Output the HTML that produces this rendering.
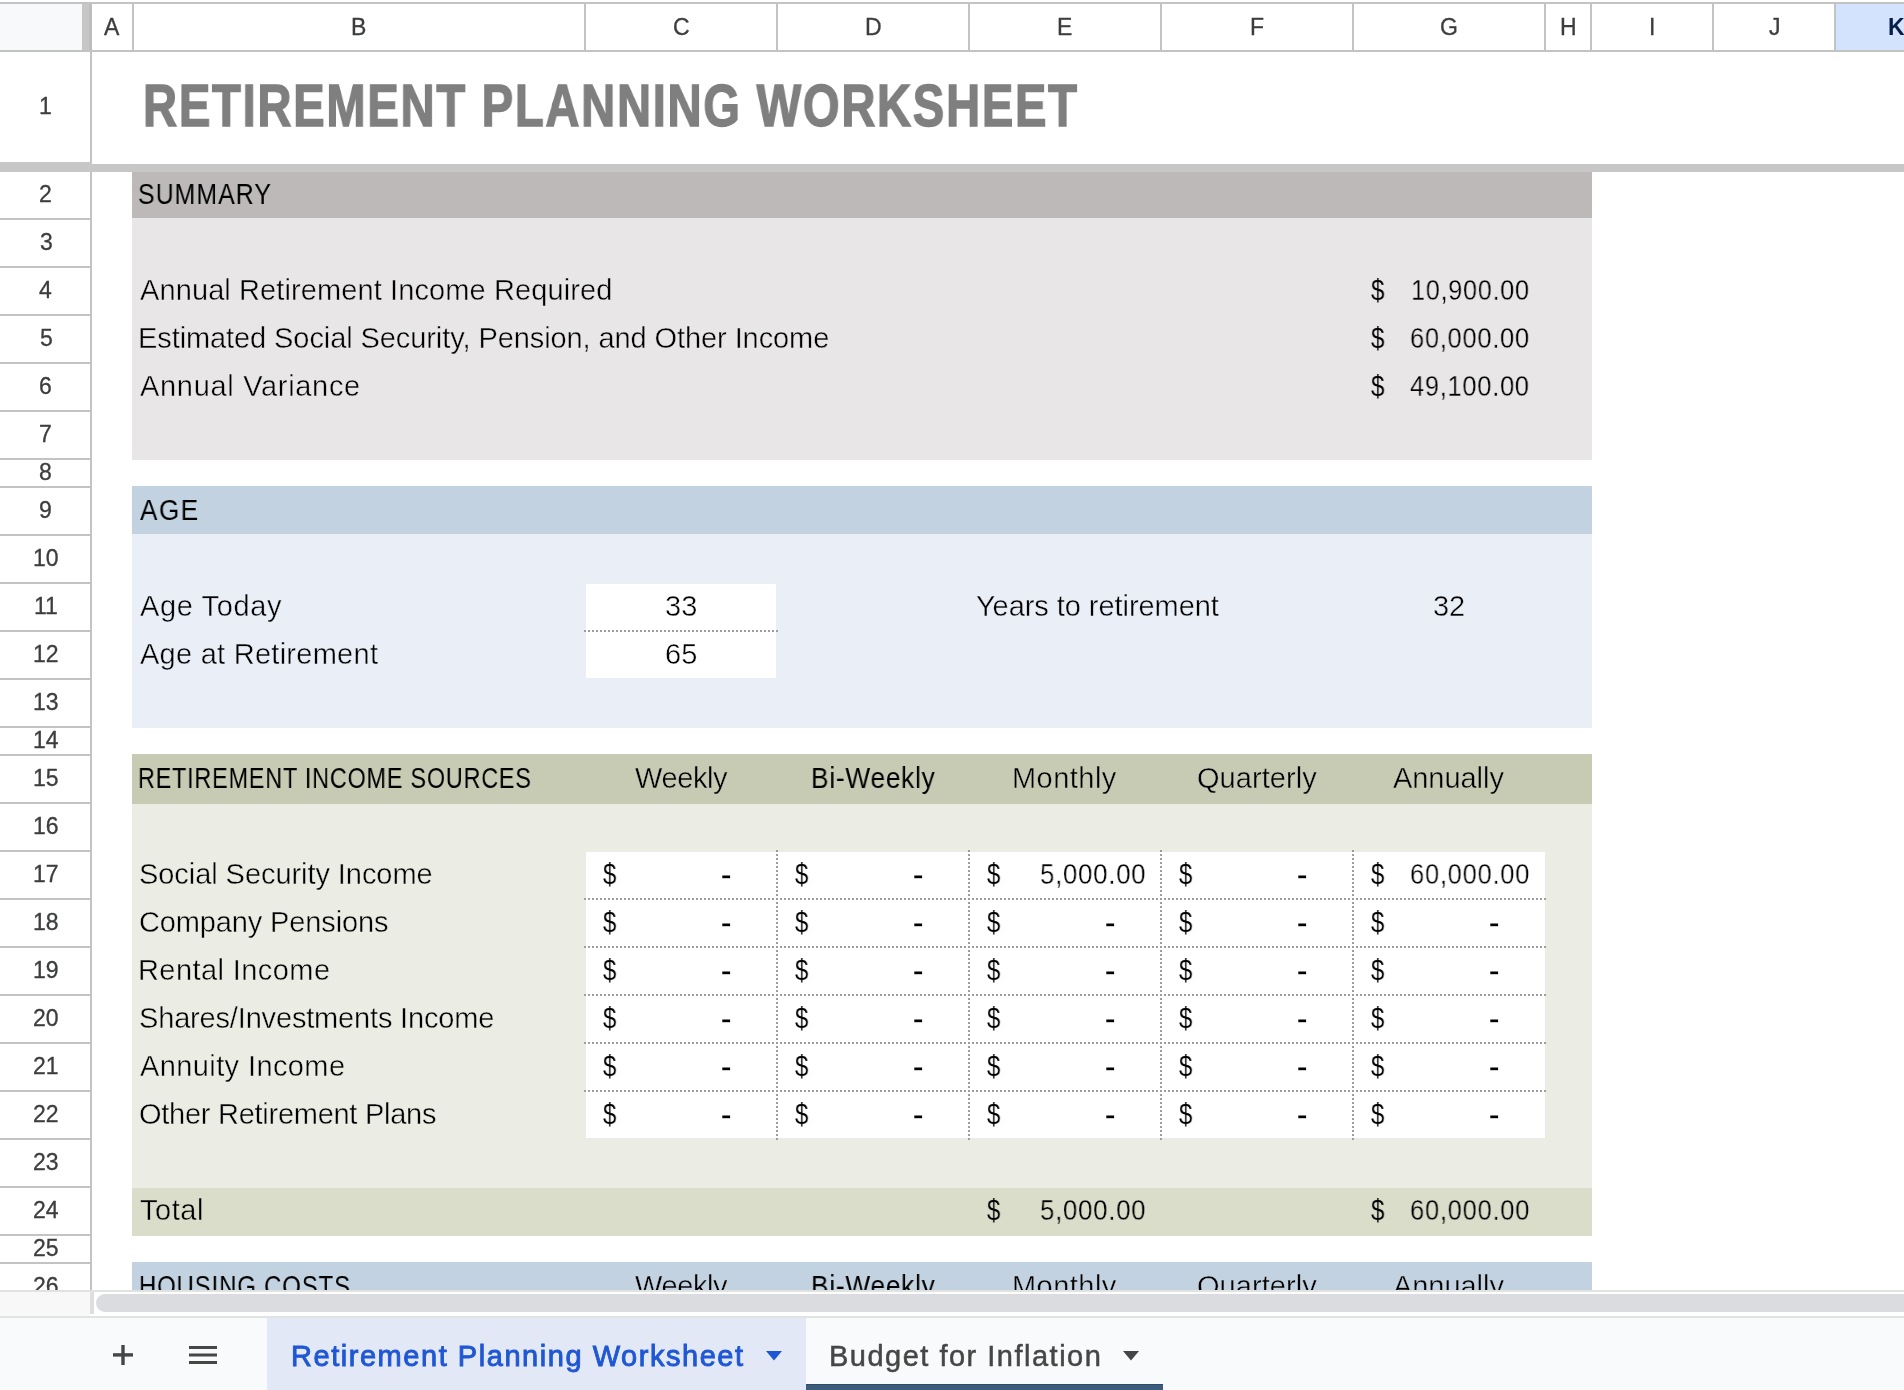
<!DOCTYPE html>
<html><head><meta charset="utf-8"><title>Retirement Planning Worksheet</title>
<style>
html,body{margin:0;padding:0;width:1904px;height:1390px;overflow:hidden;background:#fff}
body>div,body>svg{position:absolute}
.t{font-family:"Liberation Sans",sans-serif;line-height:1;white-space:nowrap;will-change:transform;-webkit-font-smoothing:antialiased}
</style></head><body>
<div style="left:0px;top:0px;width:1904px;height:1390px;background:#ffffff;"></div>
<div style="left:0px;top:2px;width:1904px;height:2px;background:#c2c4c3;"></div>
<div style="left:0px;top:4px;width:82px;height:46px;background:#f8f9fa;"></div>
<div style="left:82px;top:4px;width:10px;height:46px;background:#c7c7c7;"></div>
<div style="left:89px;top:4px;width:3px;height:46px;background:#bdbdbd;"></div>
<div style="left:0px;top:50px;width:1904px;height:2px;background:#c2c4c3;"></div>
<div style="left:132px;top:4px;width:2px;height:46px;background:#c2c4c3;"></div>
<div style="left:584px;top:4px;width:2px;height:46px;background:#c2c4c3;"></div>
<div style="left:776px;top:4px;width:2px;height:46px;background:#c2c4c3;"></div>
<div style="left:968px;top:4px;width:2px;height:46px;background:#c2c4c3;"></div>
<div style="left:1160px;top:4px;width:2px;height:46px;background:#c2c4c3;"></div>
<div style="left:1352px;top:4px;width:2px;height:46px;background:#c2c4c3;"></div>
<div style="left:1544px;top:4px;width:2px;height:46px;background:#c2c4c3;"></div>
<div style="left:1590px;top:4px;width:2px;height:46px;background:#c2c4c3;"></div>
<div style="left:1712px;top:4px;width:2px;height:46px;background:#c2c4c3;"></div>
<div style="left:1834px;top:4px;width:2px;height:46px;background:#c2c4c3;"></div>
<div style="left:1836px;top:4px;width:68px;height:46px;background:#d3e3fd;"></div>
<div style="left:132px;top:172px;width:1460px;height:46px;background:#bdb9b9;"></div>
<div style="left:132px;top:218px;width:1460px;height:242px;background:#e8e6e7;"></div>
<div style="left:132px;top:486px;width:1460px;height:48px;background:#c3d2e1;"></div>
<div style="left:132px;top:534px;width:1460px;height:194px;background:#eaeef6;"></div>
<div style="left:132px;top:754px;width:1460px;height:50px;background:#c8cbb4;"></div>
<div style="left:132px;top:804px;width:1460px;height:384px;background:#ebece4;"></div>
<div style="left:132px;top:1188px;width:1460px;height:48px;background:#dbddcb;"></div>
<div style="left:132px;top:1262px;width:1460px;height:28px;background:#c3d2e1;"></div>
<div style="left:586px;top:584px;width:190px;height:94px;background:#ffffff;"></div>
<div style="left:586px;top:852px;width:959px;height:286px;background:#ffffff;"></div>
<div style="left:584px;top:630px;width:194px;height:2px;background:repeating-linear-gradient(90deg,#9e9e9e 0 2px,transparent 2px 4px);background-position:0px 0"></div>
<div style="left:584px;top:898px;width:962px;height:2px;background:repeating-linear-gradient(90deg,#9e9e9e 0 2px,transparent 2px 4px);background-position:0px 0"></div>
<div style="left:584px;top:946px;width:962px;height:2px;background:repeating-linear-gradient(90deg,#9e9e9e 0 2px,transparent 2px 4px);background-position:0px 0"></div>
<div style="left:584px;top:994px;width:962px;height:2px;background:repeating-linear-gradient(90deg,#9e9e9e 0 2px,transparent 2px 4px);background-position:0px 0"></div>
<div style="left:584px;top:1042px;width:962px;height:2px;background:repeating-linear-gradient(90deg,#9e9e9e 0 2px,transparent 2px 4px);background-position:0px 0"></div>
<div style="left:584px;top:1090px;width:962px;height:2px;background:repeating-linear-gradient(90deg,#9e9e9e 0 2px,transparent 2px 4px);background-position:0px 0"></div>
<div style="left:776px;top:850px;width:2px;height:290px;background:repeating-linear-gradient(180deg,#9e9e9e 0 2px,transparent 2px 4px);background-position:0 0px"></div>
<div style="left:968px;top:850px;width:2px;height:290px;background:repeating-linear-gradient(180deg,#9e9e9e 0 2px,transparent 2px 4px);background-position:0 0px"></div>
<div style="left:1160px;top:850px;width:2px;height:290px;background:repeating-linear-gradient(180deg,#9e9e9e 0 2px,transparent 2px 4px);background-position:0 0px"></div>
<div style="left:1352px;top:850px;width:2px;height:290px;background:repeating-linear-gradient(180deg,#9e9e9e 0 2px,transparent 2px 4px);background-position:0 0px"></div>
<div style="left:90px;top:52px;width:2px;height:1238px;background:#c2c4c3;"></div>
<div style="left:0px;top:218px;width:90px;height:2px;background:#c2c4c3;"></div>
<div style="left:0px;top:266px;width:90px;height:2px;background:#c2c4c3;"></div>
<div style="left:0px;top:314px;width:90px;height:2px;background:#c2c4c3;"></div>
<div style="left:0px;top:362px;width:90px;height:2px;background:#c2c4c3;"></div>
<div style="left:0px;top:410px;width:90px;height:2px;background:#c2c4c3;"></div>
<div style="left:0px;top:458px;width:90px;height:2px;background:#c2c4c3;"></div>
<div style="left:0px;top:486px;width:90px;height:2px;background:#c2c4c3;"></div>
<div style="left:0px;top:534px;width:90px;height:2px;background:#c2c4c3;"></div>
<div style="left:0px;top:582px;width:90px;height:2px;background:#c2c4c3;"></div>
<div style="left:0px;top:630px;width:90px;height:2px;background:#c2c4c3;"></div>
<div style="left:0px;top:678px;width:90px;height:2px;background:#c2c4c3;"></div>
<div style="left:0px;top:726px;width:90px;height:2px;background:#c2c4c3;"></div>
<div style="left:0px;top:754px;width:90px;height:2px;background:#c2c4c3;"></div>
<div style="left:0px;top:802px;width:90px;height:2px;background:#c2c4c3;"></div>
<div style="left:0px;top:850px;width:90px;height:2px;background:#c2c4c3;"></div>
<div style="left:0px;top:898px;width:90px;height:2px;background:#c2c4c3;"></div>
<div style="left:0px;top:946px;width:90px;height:2px;background:#c2c4c3;"></div>
<div style="left:0px;top:994px;width:90px;height:2px;background:#c2c4c3;"></div>
<div style="left:0px;top:1042px;width:90px;height:2px;background:#c2c4c3;"></div>
<div style="left:0px;top:1090px;width:90px;height:2px;background:#c2c4c3;"></div>
<div style="left:0px;top:1138px;width:90px;height:2px;background:#c2c4c3;"></div>
<div style="left:0px;top:1186px;width:90px;height:2px;background:#c2c4c3;"></div>
<div style="left:0px;top:1234px;width:90px;height:2px;background:#c2c4c3;"></div>
<div style="left:0px;top:1262px;width:90px;height:2px;background:#c2c4c3;"></div>
<div style="left:0px;top:162px;width:92px;height:10px;background:#c7c7c7;"></div>
<div style="left:92px;top:164px;width:1812px;height:8px;background:#c7c7c7;"></div>
<div style="left:0px;top:1290px;width:1904px;height:2px;background:#e1e3e1;"></div>
<div style="left:0px;top:1292px;width:90px;height:24px;background:#f8f8f8;"></div>
<div style="left:90px;top:1292px;width:4px;height:22px;background:#dedede;"></div>
<div style="left:94px;top:1292px;width:1810px;height:24px;background:#ffffff;"></div>
<div style="left:96px;top:1294px;width:1830px;height:18px;border-radius:9px;background:#dadce0"></div>
<div style="left:0px;top:1316px;width:1904px;height:2px;background:#e1e3e1;"></div>
<div style="left:0px;top:1318px;width:1904px;height:72px;background:#f9fafc;"></div>
<div style="left:267px;top:1318px;width:539px;height:72px;background:#e3e8f6;"></div>
<div style="left:806px;top:1384px;width:357px;height:6px;background:#3d5c7c;"></div>
<div style="left:806px;top:1384px;width:357px;height:1px;background:#2d4d6e;"></div>
<svg style="left:0;top:0;position:absolute" width="1904" height="1390"><g fill="#444746"><rect x="113" y="1353.2" width="20" height="3.4"/><rect x="121.3" y="1345" width="3.4" height="20"/><rect x="189" y="1346" width="28" height="3"/><rect x="189" y="1353.5" width="28" height="3"/><rect x="189" y="1361" width="28" height="3"/><path d="M766 1351 L782 1351 L774 1360.5 Z" fill="#1f57d3"/><path d="M1123 1351 L1139 1351 L1131 1360.5 Z"/></g></svg>
<svg style="left:0;top:0;position:absolute" width="1904" height="1390"><g fill="#000"><rect x="722.3" y="875.5" width="7.8" height="2.7"/><rect x="914.3" y="875.5" width="7.8" height="2.7"/><rect x="1298.3" y="875.5" width="7.8" height="2.7"/><rect x="722.3" y="923.5" width="7.8" height="2.7"/><rect x="914.3" y="923.5" width="7.8" height="2.7"/><rect x="1106.3" y="923.5" width="7.8" height="2.7"/><rect x="1298.3" y="923.5" width="7.8" height="2.7"/><rect x="1490.3" y="923.5" width="7.8" height="2.7"/><rect x="722.3" y="971.5" width="7.8" height="2.7"/><rect x="914.3" y="971.5" width="7.8" height="2.7"/><rect x="1106.3" y="971.5" width="7.8" height="2.7"/><rect x="1298.3" y="971.5" width="7.8" height="2.7"/><rect x="1490.3" y="971.5" width="7.8" height="2.7"/><rect x="722.3" y="1019.5" width="7.8" height="2.7"/><rect x="914.3" y="1019.5" width="7.8" height="2.7"/><rect x="1106.3" y="1019.5" width="7.8" height="2.7"/><rect x="1298.3" y="1019.5" width="7.8" height="2.7"/><rect x="1490.3" y="1019.5" width="7.8" height="2.7"/><rect x="722.3" y="1067.5" width="7.8" height="2.7"/><rect x="914.3" y="1067.5" width="7.8" height="2.7"/><rect x="1106.3" y="1067.5" width="7.8" height="2.7"/><rect x="1298.3" y="1067.5" width="7.8" height="2.7"/><rect x="1490.3" y="1067.5" width="7.8" height="2.7"/><rect x="722.3" y="1115.5" width="7.8" height="2.7"/><rect x="914.3" y="1115.5" width="7.8" height="2.7"/><rect x="1106.3" y="1115.5" width="7.8" height="2.7"/><rect x="1298.3" y="1115.5" width="7.8" height="2.7"/><rect x="1490.3" y="1115.5" width="7.8" height="2.7"/></g></svg>
<div class="t" style="left:104.15px;top:16px;font-size:23px;color:#3b3d3e;-webkit-text-stroke:0.3px #3b3d3e;">A</div>
<div class="t" style="left:351.15px;top:16px;font-size:23px;color:#3b3d3e;-webkit-text-stroke:0.3px #3b3d3e;">B</div>
<div class="t" style="left:672.65px;top:16px;font-size:23px;color:#3b3d3e;-webkit-text-stroke:0.3px #3b3d3e;">C</div>
<div class="t" style="left:864.65px;top:16px;font-size:23px;color:#3b3d3e;-webkit-text-stroke:0.3px #3b3d3e;">D</div>
<div class="t" style="left:1057.15px;top:16px;font-size:23px;color:#3b3d3e;-webkit-text-stroke:0.3px #3b3d3e;">E</div>
<div class="t" style="left:1249.65px;top:16px;font-size:23px;color:#3b3d3e;-webkit-text-stroke:0.3px #3b3d3e;">F</div>
<div class="t" style="left:1440.15px;top:16px;font-size:23px;color:#3b3d3e;-webkit-text-stroke:0.3px #3b3d3e;">G</div>
<div class="t" style="left:1560.15px;top:16px;font-size:23px;color:#3b3d3e;-webkit-text-stroke:0.3px #3b3d3e;">H</div>
<div class="t" style="left:1648.65px;top:16px;font-size:23px;color:#3b3d3e;-webkit-text-stroke:0.3px #3b3d3e;">I</div>
<div class="t" style="left:1769.15px;top:16px;font-size:23px;color:#3b3d3e;-webkit-text-stroke:0.3px #3b3d3e;">J</div>
<div class="t" style="left:1888.00px;top:16px;font-size:23px;color:#041e49;font-weight:bold;">K</div>
<div class="t" style="left:39.45px;top:95px;font-size:23px;color:#3b3d3e;-webkit-text-stroke:0.3px #3b3d3e;">1</div>
<div class="t" style="left:39.45px;top:183px;font-size:23px;color:#3b3d3e;-webkit-text-stroke:0.3px #3b3d3e;">2</div>
<div class="t" style="left:39.95px;top:231px;font-size:23px;color:#3b3d3e;-webkit-text-stroke:0.3px #3b3d3e;">3</div>
<div class="t" style="left:39.45px;top:279px;font-size:23px;color:#3b3d3e;-webkit-text-stroke:0.3px #3b3d3e;">4</div>
<div class="t" style="left:39.95px;top:327px;font-size:23px;color:#3b3d3e;-webkit-text-stroke:0.3px #3b3d3e;">5</div>
<div class="t" style="left:39.45px;top:375px;font-size:23px;color:#3b3d3e;-webkit-text-stroke:0.3px #3b3d3e;">6</div>
<div class="t" style="left:39.45px;top:423px;font-size:23px;color:#3b3d3e;-webkit-text-stroke:0.3px #3b3d3e;">7</div>
<div class="t" style="left:39.45px;top:461px;font-size:23px;color:#3b3d3e;-webkit-text-stroke:0.3px #3b3d3e;">8</div>
<div class="t" style="left:39.45px;top:499px;font-size:23px;color:#3b3d3e;-webkit-text-stroke:0.3px #3b3d3e;">9</div>
<div class="t" style="left:33.05px;top:547px;font-size:23px;color:#3b3d3e;-webkit-text-stroke:0.3px #3b3d3e;">10</div>
<div class="t" style="left:33.91px;top:595px;font-size:23px;color:#3b3d3e;-webkit-text-stroke:0.3px #3b3d3e;">11</div>
<div class="t" style="left:33.05px;top:643px;font-size:23px;color:#3b3d3e;-webkit-text-stroke:0.3px #3b3d3e;">12</div>
<div class="t" style="left:33.05px;top:691px;font-size:23px;color:#3b3d3e;-webkit-text-stroke:0.3px #3b3d3e;">13</div>
<div class="t" style="left:32.55px;top:729px;font-size:23px;color:#3b3d3e;-webkit-text-stroke:0.3px #3b3d3e;">14</div>
<div class="t" style="left:33.05px;top:767px;font-size:23px;color:#3b3d3e;-webkit-text-stroke:0.3px #3b3d3e;">15</div>
<div class="t" style="left:33.05px;top:815px;font-size:23px;color:#3b3d3e;-webkit-text-stroke:0.3px #3b3d3e;">16</div>
<div class="t" style="left:33.05px;top:863px;font-size:23px;color:#3b3d3e;-webkit-text-stroke:0.3px #3b3d3e;">17</div>
<div class="t" style="left:33.05px;top:911px;font-size:23px;color:#3b3d3e;-webkit-text-stroke:0.3px #3b3d3e;">18</div>
<div class="t" style="left:33.05px;top:959px;font-size:23px;color:#3b3d3e;-webkit-text-stroke:0.3px #3b3d3e;">19</div>
<div class="t" style="left:33.05px;top:1007px;font-size:23px;color:#3b3d3e;-webkit-text-stroke:0.3px #3b3d3e;">20</div>
<div class="t" style="left:33.05px;top:1055px;font-size:23px;color:#3b3d3e;-webkit-text-stroke:0.3px #3b3d3e;">21</div>
<div class="t" style="left:33.05px;top:1103px;font-size:23px;color:#3b3d3e;-webkit-text-stroke:0.3px #3b3d3e;">22</div>
<div class="t" style="left:33.05px;top:1151px;font-size:23px;color:#3b3d3e;-webkit-text-stroke:0.3px #3b3d3e;">23</div>
<div class="t" style="left:32.55px;top:1199px;font-size:23px;color:#3b3d3e;-webkit-text-stroke:0.3px #3b3d3e;">24</div>
<div class="t" style="left:33.05px;top:1237px;font-size:23px;color:#3b3d3e;-webkit-text-stroke:0.3px #3b3d3e;">25</div>
<div class="t" style="left:33.05px;top:1275px;font-size:23px;color:#3b3d3e;-webkit-text-stroke:0.3px #3b3d3e;height:15px;overflow:hidden;">26</div>
<div class="t" style="left:142.56px;top:77px;font-size:59px;color:#7f7f7f;transform:scaleX(0.8010);transform-origin:0 0;font-weight:bold;-webkit-text-stroke:1.4px #7f7f7f;letter-spacing:2.077px;">RETIREMENT PLANNING WORKSHEET</div>
<div class="t" style="left:138.34px;top:180px;font-size:29px;color:#000;transform:scaleX(0.8555);transform-origin:0 0;letter-spacing:1.284px;">SUMMARY</div>
<div class="t" style="left:139.70px;top:276px;font-size:29px;color:#000;-webkit-text-stroke:0.4px #e8e6e7;letter-spacing:0.101px;">Annual Retirement Income Required</div>
<div class="t" style="left:137.70px;top:324px;font-size:29px;color:#000;-webkit-text-stroke:0.4px #e8e6e7;letter-spacing:-0.088px;">Estimated Social Security, Pension, and Other Income</div>
<div class="t" style="left:139.70px;top:372px;font-size:29px;color:#000;-webkit-text-stroke:0.4px #e8e6e7;letter-spacing:0.683px;">Annual Variance</div>
<div class="t" style="left:1370.70px;top:276px;font-size:29px;color:#000;transform:scaleX(0.8312);transform-origin:0 0;">$</div>
<div class="t" style="left:1411.16px;top:276px;font-size:29px;color:#000;transform:scaleX(0.8701);transform-origin:0 0;-webkit-text-stroke:0.3px #e8e6e7;letter-spacing:0.828px;">10,900.00</div>
<div class="t" style="left:1370.70px;top:324px;font-size:29px;color:#000;transform:scaleX(0.8312);transform-origin:0 0;">$</div>
<div class="t" style="left:1410.02px;top:324px;font-size:29px;color:#000;transform:scaleX(0.8782);transform-origin:0 0;-webkit-text-stroke:0.3px #e8e6e7;letter-spacing:0.835px;">60,000.00</div>
<div class="t" style="left:1370.70px;top:372px;font-size:29px;color:#000;transform:scaleX(0.8312);transform-origin:0 0;">$</div>
<div class="t" style="left:1410.20px;top:372px;font-size:29px;color:#000;transform:scaleX(0.8766);transform-origin:0 0;-webkit-text-stroke:0.3px #e8e6e7;letter-spacing:0.841px;">49,100.00</div>
<div class="t" style="left:139.90px;top:496px;font-size:29px;color:#000;transform:scaleX(0.9032);transform-origin:0 0;letter-spacing:1.603px;">AGE</div>
<div class="t" style="left:139.90px;top:592px;font-size:29px;color:#000;-webkit-text-stroke:0.4px #eaeef6;letter-spacing:0.620px;">Age Today</div>
<div class="t" style="left:139.90px;top:640px;font-size:29px;color:#000;-webkit-text-stroke:0.4px #eaeef6;letter-spacing:0.264px;">Age at Retirement</div>
<div class="t" style="left:664.94px;top:592px;font-size:29px;color:#000;-webkit-text-stroke:0.4px #ffffff;">33</div>
<div class="t" style="left:664.94px;top:640px;font-size:29px;color:#000;-webkit-text-stroke:0.4px #ffffff;">65</div>
<div class="t" style="left:976.20px;top:592px;font-size:29px;color:#000;-webkit-text-stroke:0.4px #eaeef6;letter-spacing:-0.060px;">Years to retirement</div>
<div class="t" style="left:1433.10px;top:592px;font-size:29px;color:#000;-webkit-text-stroke:0.4px #eaeef6;letter-spacing:-0.128px;">32</div>
<div class="t" style="left:138.19px;top:764px;font-size:29px;color:#000;transform:scaleX(0.8054);transform-origin:0 0;letter-spacing:1.012px;">RETIREMENT INCOME SOURCES</div>
<div class="t" style="left:634.90px;top:764px;font-size:29px;color:#000;-webkit-text-stroke:0.4px #c8cbb4;letter-spacing:-0.409px;">Weekly</div>
<div class="t" style="left:810.59px;top:764px;font-size:29px;color:#000;transform:scaleX(0.9050);transform-origin:0 0;letter-spacing:0.845px;">Bi-Weekly</div>
<div class="t" style="left:1012.20px;top:764px;font-size:29px;color:#000;-webkit-text-stroke:0.4px #c8cbb4;letter-spacing:0.460px;">Monthly</div>
<div class="t" style="left:1196.70px;top:764px;font-size:29px;color:#000;-webkit-text-stroke:0.4px #c8cbb4;letter-spacing:0.055px;">Quarterly</div>
<div class="t" style="left:1393.30px;top:764px;font-size:29px;color:#000;-webkit-text-stroke:0.4px #c8cbb4;letter-spacing:-0.049px;">Annually</div>
<div class="t" style="left:138.80px;top:860px;font-size:29px;color:#000;-webkit-text-stroke:0.4px #ebece4;letter-spacing:-0.063px;">Social Security Income</div>
<div class="t" style="left:602.80px;top:860px;font-size:29px;color:#000;transform:scaleX(0.8250);transform-origin:0 0;">$</div>
<div class="t" style="left:794.80px;top:860px;font-size:29px;color:#000;transform:scaleX(0.8250);transform-origin:0 0;">$</div>
<div class="t" style="left:986.80px;top:860px;font-size:29px;color:#000;transform:scaleX(0.8250);transform-origin:0 0;">$</div>
<div class="t" style="left:1039.61px;top:860px;font-size:29px;color:#000;transform:scaleX(0.8895);transform-origin:0 0;-webkit-text-stroke:0.3px #ffffff;letter-spacing:0.833px;">5,000.00</div>
<div class="t" style="left:1178.80px;top:860px;font-size:29px;color:#000;transform:scaleX(0.8250);transform-origin:0 0;">$</div>
<div class="t" style="left:1370.80px;top:860px;font-size:29px;color:#000;transform:scaleX(0.8250);transform-origin:0 0;">$</div>
<div class="t" style="left:1409.62px;top:860px;font-size:29px;color:#000;transform:scaleX(0.8805);transform-origin:0 0;-webkit-text-stroke:0.3px #ffffff;letter-spacing:0.835px;">60,000.00</div>
<div class="t" style="left:138.80px;top:908px;font-size:29px;color:#000;-webkit-text-stroke:0.4px #ebece4;letter-spacing:-0.131px;">Company Pensions</div>
<div class="t" style="left:602.80px;top:908px;font-size:29px;color:#000;transform:scaleX(0.8250);transform-origin:0 0;">$</div>
<div class="t" style="left:794.80px;top:908px;font-size:29px;color:#000;transform:scaleX(0.8250);transform-origin:0 0;">$</div>
<div class="t" style="left:986.80px;top:908px;font-size:29px;color:#000;transform:scaleX(0.8250);transform-origin:0 0;">$</div>
<div class="t" style="left:1178.80px;top:908px;font-size:29px;color:#000;transform:scaleX(0.8250);transform-origin:0 0;">$</div>
<div class="t" style="left:1370.80px;top:908px;font-size:29px;color:#000;transform:scaleX(0.8250);transform-origin:0 0;">$</div>
<div class="t" style="left:137.80px;top:956px;font-size:29px;color:#000;-webkit-text-stroke:0.4px #ebece4;letter-spacing:0.420px;">Rental Income</div>
<div class="t" style="left:602.80px;top:956px;font-size:29px;color:#000;transform:scaleX(0.8250);transform-origin:0 0;">$</div>
<div class="t" style="left:794.80px;top:956px;font-size:29px;color:#000;transform:scaleX(0.8250);transform-origin:0 0;">$</div>
<div class="t" style="left:986.80px;top:956px;font-size:29px;color:#000;transform:scaleX(0.8250);transform-origin:0 0;">$</div>
<div class="t" style="left:1178.80px;top:956px;font-size:29px;color:#000;transform:scaleX(0.8250);transform-origin:0 0;">$</div>
<div class="t" style="left:1370.80px;top:956px;font-size:29px;color:#000;transform:scaleX(0.8250);transform-origin:0 0;">$</div>
<div class="t" style="left:138.80px;top:1004px;font-size:29px;color:#000;-webkit-text-stroke:0.4px #ebece4;letter-spacing:-0.171px;">Shares/Investments Income</div>
<div class="t" style="left:602.80px;top:1004px;font-size:29px;color:#000;transform:scaleX(0.8250);transform-origin:0 0;">$</div>
<div class="t" style="left:794.80px;top:1004px;font-size:29px;color:#000;transform:scaleX(0.8250);transform-origin:0 0;">$</div>
<div class="t" style="left:986.80px;top:1004px;font-size:29px;color:#000;transform:scaleX(0.8250);transform-origin:0 0;">$</div>
<div class="t" style="left:1178.80px;top:1004px;font-size:29px;color:#000;transform:scaleX(0.8250);transform-origin:0 0;">$</div>
<div class="t" style="left:1370.80px;top:1004px;font-size:29px;color:#000;transform:scaleX(0.8250);transform-origin:0 0;">$</div>
<div class="t" style="left:139.80px;top:1052px;font-size:29px;color:#000;-webkit-text-stroke:0.4px #ebece4;letter-spacing:0.396px;">Annuity Income</div>
<div class="t" style="left:602.80px;top:1052px;font-size:29px;color:#000;transform:scaleX(0.8250);transform-origin:0 0;">$</div>
<div class="t" style="left:794.80px;top:1052px;font-size:29px;color:#000;transform:scaleX(0.8250);transform-origin:0 0;">$</div>
<div class="t" style="left:986.80px;top:1052px;font-size:29px;color:#000;transform:scaleX(0.8250);transform-origin:0 0;">$</div>
<div class="t" style="left:1178.80px;top:1052px;font-size:29px;color:#000;transform:scaleX(0.8250);transform-origin:0 0;">$</div>
<div class="t" style="left:1370.80px;top:1052px;font-size:29px;color:#000;transform:scaleX(0.8250);transform-origin:0 0;">$</div>
<div class="t" style="left:138.80px;top:1100px;font-size:29px;color:#000;-webkit-text-stroke:0.4px #ebece4;letter-spacing:-0.267px;">Other Retirement Plans</div>
<div class="t" style="left:602.80px;top:1100px;font-size:29px;color:#000;transform:scaleX(0.8250);transform-origin:0 0;">$</div>
<div class="t" style="left:794.80px;top:1100px;font-size:29px;color:#000;transform:scaleX(0.8250);transform-origin:0 0;">$</div>
<div class="t" style="left:986.80px;top:1100px;font-size:29px;color:#000;transform:scaleX(0.8250);transform-origin:0 0;">$</div>
<div class="t" style="left:1178.80px;top:1100px;font-size:29px;color:#000;transform:scaleX(0.8250);transform-origin:0 0;">$</div>
<div class="t" style="left:1370.80px;top:1100px;font-size:29px;color:#000;transform:scaleX(0.8250);transform-origin:0 0;">$</div>
<div class="t" style="left:139.80px;top:1196px;font-size:29px;color:#000;-webkit-text-stroke:0.4px #dbddcb;letter-spacing:0.547px;">Total</div>
<div class="t" style="left:986.80px;top:1196px;font-size:29px;color:#000;transform:scaleX(0.8250);transform-origin:0 0;">$</div>
<div class="t" style="left:1039.61px;top:1196px;font-size:29px;color:#000;transform:scaleX(0.8895);transform-origin:0 0;-webkit-text-stroke:0.3px #dbddcb;letter-spacing:0.833px;">5,000.00</div>
<div class="t" style="left:1370.70px;top:1196px;font-size:29px;color:#000;transform:scaleX(0.8312);transform-origin:0 0;">$</div>
<div class="t" style="left:1409.62px;top:1196px;font-size:29px;color:#000;transform:scaleX(0.8805);transform-origin:0 0;-webkit-text-stroke:0.3px #dbddcb;letter-spacing:0.835px;">60,000.00</div>
<div class="t" style="left:139.35px;top:1272px;font-size:29px;color:#000;transform:scaleX(0.8244);transform-origin:0 0;letter-spacing:1.057px;height:18px;overflow:hidden;">HOUSING COSTS</div>
<div class="t" style="left:634.90px;top:1272px;font-size:29px;color:#000;-webkit-text-stroke:0.4px #c3d2e1;letter-spacing:-0.409px;height:18px;overflow:hidden;">Weekly</div>
<div class="t" style="left:810.59px;top:1272px;font-size:29px;color:#000;transform:scaleX(0.9050);transform-origin:0 0;letter-spacing:0.845px;height:18px;overflow:hidden;">Bi-Weekly</div>
<div class="t" style="left:1012.20px;top:1272px;font-size:29px;color:#000;-webkit-text-stroke:0.4px #c3d2e1;letter-spacing:0.460px;height:18px;overflow:hidden;">Monthly</div>
<div class="t" style="left:1196.70px;top:1272px;font-size:29px;color:#000;-webkit-text-stroke:0.4px #c3d2e1;letter-spacing:0.055px;height:18px;overflow:hidden;">Quarterly</div>
<div class="t" style="left:1393.30px;top:1272px;font-size:29px;color:#000;-webkit-text-stroke:0.4px #c3d2e1;letter-spacing:-0.049px;height:18px;overflow:hidden;">Annually</div>
<div class="t" style="left:290.85px;top:1342px;font-size:29px;color:#1f57d3;-webkit-text-stroke:0.9px #1f57d3;letter-spacing:1.542px;">Retirement Planning Worksheet</div>
<div class="t" style="left:828.75px;top:1342px;font-size:29px;color:#444746;-webkit-text-stroke:0.5px #444746;letter-spacing:1.494px;">Budget for Inflation</div>
</body></html>
